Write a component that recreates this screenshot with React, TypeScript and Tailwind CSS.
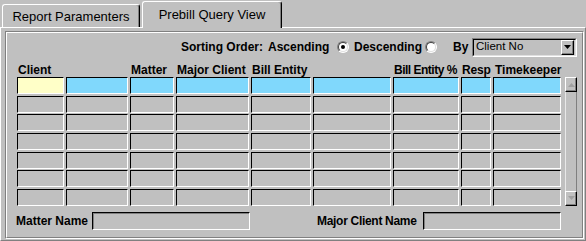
import React from "react";

const cols = ["Client", "", "Matter", "Major Client", "Bill Entity", "", "Bill Entity %", "Resp", "Timekeeper"];

function Cell({ color }: { color: string }) {
  return (
    <div
      className={`h-[17px] border-t border-l border-t-[#000] border-l-[#000] border-b border-r border-b-white border-r-white ${color}`}
    />
  );
}

function Radio({ checked }: { checked: boolean }) {
  return (
    <div className="w-[12px] h-[12px] rounded-full border border-t-[#808080] border-l-[#808080] border-b-white border-r-white bg-[#dcdcdc] flex items-center justify-center">
      <div className="w-[10px] h-[10px] rounded-full border border-t-[#404040] border-l-[#404040] border-b-[#e0e0e0] border-r-[#e0e0e0] bg-white flex items-center justify-center">
        {checked && <div className="w-[4px] h-[4px] rounded-full bg-black" />}
      </div>
    </div>
  );
}

function ScrollBtn({ up }: { up: boolean }) {
  return (
    <div className="h-[15px] w-full border-t border-l border-t-white border-l-white border-b border-r border-b-black border-r-black bg-[#c0c0c0] shadow-[inset_-1px_-1px_0_#808080] flex items-center justify-center">
      <svg width="7" height="4" viewBox="0 0 7 4">
        {up ? (
          <polygon points="3.5,0 7,4 0,4" fill="#a0a0a0" />
        ) : (
          <polygon points="0,0 7,0 3.5,4" fill="#a0a0a0" />
        )}
      </svg>
    </div>
  );
}

export default function App() {
  const rows = Array.from({ length: 7 }, (_, i) => i);
  return (
    <div className="w-[586px] h-[241px] bg-[#c0c0c0] flex flex-col overflow-hidden text-black font-['Liberation_Sans',Arial,sans-serif]">
      {/* Tabs */}
      <div className="h-[27px] flex items-end relative z-10 shrink-0">
        <div className="ml-[2px] w-[138px] h-[23px] border-t border-l border-t-white border-l-white border-r border-r-black shadow-[inset_-1px_0_0_#808080] rounded-tl-[3px] rounded-tr-[3px] flex items-center justify-center text-[13px] leading-none pt-[1px]">
          Report Paramenters
        </div>
        <div className="ml-[2px] w-[140px] h-[27px] mb-[-1px] bg-[#c0c0c0] border-t border-l border-t-white border-l-white border-r border-r-black shadow-[inset_-1px_0_0_#808080] rounded-tl-[3px] rounded-tr-[3px] flex items-center justify-center text-[13px] leading-none pb-[2px]">
          Prebill Query View
        </div>
      </div>
      {/* Panel */}
      <div className="flex-1 flex flex-col border-t border-l border-t-white border-l-white border-r border-b border-r-[#808080] border-b-[#808080] pt-[3px] pl-[4px] pr-[1px] pb-[1px]">
        <div className="flex-1 flex flex-col border-t border-l border-t-[#808080] border-l-[#808080] border-b border-r border-b-white border-r-white">
          <div className="flex-1 flex flex-col border-t border-l border-t-white border-l-white border-b border-r border-b-[#808080] border-r-[#808080]">
            {/* Sort row */}
            <div className="mt-[4px] h-[20px] flex items-center pl-[174px] text-[12px] font-bold leading-none whitespace-nowrap">
              <span className="w-[87px]">Sorting Order:</span>
              <span className="w-[69px]">Ascending</span>
              <Radio checked={true} />
              <span className="ml-[5px] w-[71px]">Descending</span>
              <Radio checked={false} />
              <span className="ml-[16px] w-[19px]">By</span>
              <div className="w-[105px] h-[19px] border-t border-l border-t-[#808080] border-l-[#808080] border-b border-r border-b-white border-r-white flex">
                <div className="flex-1 flex items-center border-t border-l border-t-black border-l-black border-b border-r border-b-[#dfdfdf] border-r-[#dfdfdf] pl-[2px] pr-[1px]">
                  <span className="flex-1 text-[11.5px] font-normal">Client No</span>
                  <div className="w-[13px] h-[15px] border-t border-l border-t-white border-l-white border-b border-r border-b-black border-r-black shadow-[inset_-1px_-1px_0_#808080] flex items-center justify-center">
                    <svg width="7" height="4" viewBox="0 0 7 4">
                      <polygon points="0,0 7,0 3.5,4" fill="#000" />
                    </svg>
                  </div>
                </div>
              </div>
            </div>
            {/* Header row */}
            <div className="mt-[6px] h-[14px] pl-[10px] grid grid-cols-[47px_62px_44px_73px_60px_78px_66px_30px_68px] gap-x-[2px] text-[12px] font-bold leading-[14px] whitespace-nowrap">
              {cols.map((c, i) => (
                <div
                  key={i}
                  className={
                    i === 6
                      ? "pl-[1px] tracking-[-0.5px]"
                      : i === 7
                      ? "pl-[1px] tracking-[-0.2px]"
                      : i === 8
                      ? "pl-[2px]"
                      : "pl-[1px]"
                  }
                >
                  {c}
                </div>
              ))}
            </div>
            {/* Grid + scrollbar */}
            <div className="flex pl-[10px]">
              <div className="grid grid-cols-[47px_62px_44px_73px_60px_78px_66px_30px_68px] gap-x-[2px] gap-y-[1.67px]">
                {rows.map((r) =>
                  cols.map((_, c) => (
                    <Cell
                      key={`${r}-${c}`}
                      color={r === 0 ? (c === 0 ? "bg-[#ffffc8]" : "bg-[#80d8fc]") : "bg-[#c0c0c0]"}
                    />
                  ))
                )}
              </div>
              <div className="ml-[4px] w-[12px] flex flex-col">
                <ScrollBtn up={true} />
                <div className="flex-1 border-l border-l-[#e8e8e8] border-r border-r-[#808080]" />
                <ScrollBtn up={false} />
              </div>
            </div>
            {/* Bottom fields */}
            <div className="mt-[6px] h-[18px] flex items-center pl-[9px] text-[12px] font-bold leading-none whitespace-nowrap">
              <span className="w-[76px]">Matter Name</span>
              <div className="w-[158px] h-[18px] border-t border-l border-t-black border-l-black border-b border-r border-b-white border-r-white shadow-[inset_1px_1px_0_#808080]" />
              <span className="ml-[67px] w-[106px] tracking-[-0.3px]">Major Client Name</span>
              <div className="w-[138px] h-[18px] border-t border-l border-t-black border-l-black border-b border-r border-b-white border-r-white shadow-[inset_1px_1px_0_#808080]" />
            </div>
          </div>
        </div>
      </div>
    </div>
  );
}
